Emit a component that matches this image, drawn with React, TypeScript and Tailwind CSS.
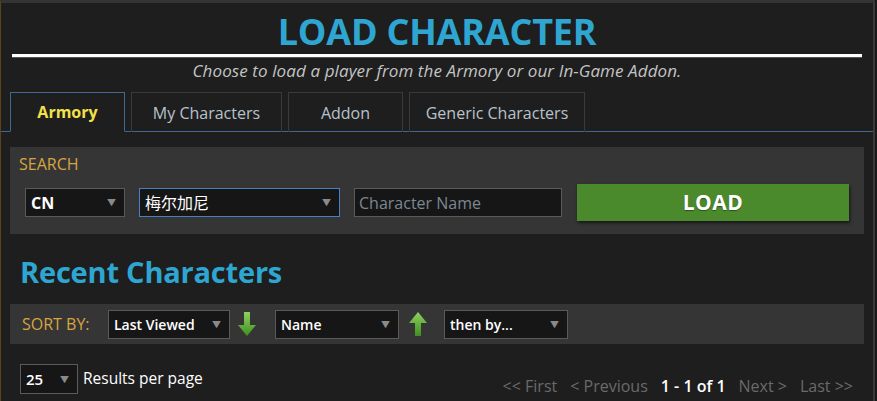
import React from "react";

const font = { fontFamily: '"Open Sans", "Noto Sans CJK SC", sans-serif' };

const tabs = [
  { label: "Armory", w: "w-[115px]", active: true },
  { label: "My Characters", w: "w-[151px]" },
  { label: "Addon", w: "w-[115px]" },
  { label: "Generic Characters", w: "w-[176px]" },
];

function Caret() {
  return <span className="text-[9px] text-[#8a8a8a] leading-none">▼</span>;
}

function Select({
  value,
  className,
  focused,
}: {
  value: string;
  className: string;
  focused?: boolean;
}) {
  return (
    <div
      className={`flex items-center justify-between bg-[#161616] border pl-[5px] pr-[8px] ${
        focused ? "border-[#4d7fc0]" : "border-[#5a5a5a]"
      } ${className}`}
    >
      <span className="text-white">{value}</span>
      <Caret />
    </div>
  );
}

function Arrow({ up }: { up?: boolean }) {
  return (
    <svg width="20" height="26" viewBox="0 0 20 26" className={up ? "rotate-180" : ""}>
      <defs>
        <linearGradient id={up ? "gu" : "gd"} x1="0" y1="0" x2="0" y2="1">
          <stop offset="0" stopColor={up ? "#3f8f1f" : "#8fd060"} />
          <stop offset="1" stopColor={up ? "#8fd060" : "#3f8f1f"} />
        </linearGradient>
      </defs>
      <path d="M7 1h6v13h6L10 25 1 14h6z" fill={`url(#${up ? "gu" : "gd"})`} />
    </svg>
  );
}

export default function App() {
  return (
    <div className="w-[877px] h-[401px] overflow-hidden bg-[#191919] pr-[2px]" style={font}>
      <div className="h-full bg-[#1e1e1e] border-t-[3px] border-t-[#343434] border-l border-l-[#5e4318] border-r-2 border-r-[#3a3a3a]">
        {/* header */}
        <div className="px-[11px] pt-[9px]">
          <h1 className="text-center text-[36px] leading-[40px] font-bold text-[#2ea6d1] tracking-[-0.2px]">
            LOAD CHARACTER
          </h1>
          <div className="h-[3px] bg-white mt-[2px] shadow-[0_1px_0_#555]" />
          <p className="text-center italic text-[17px] text-[#c4c4c4] mt-[3px] leading-[22px] tracking-[0.1px]">
            Choose to load a player from the Armory or our In-Game Addon.
          </p>
        </div>

        {/* tabs */}
        <div className="flex gap-[6px] pl-[9px] mt-[10px] border-b border-[#3b6b95] h-[40px]">
          {tabs.map((t) => (
            <div
              key={t.label}
              className={`${t.w} h-[40px] flex items-center justify-center border text-[16px] ${
                t.active
                  ? "border-[#3b6b95] border-b-[#1e1e1e] text-[#f2e24a] font-bold"
                  : "border-[#3a3a3a] border-b-0 h-[39px] text-[#b8c2cc]"
              }`}
            >
              {t.label}
            </div>
          ))}
        </div>

        {/* search panel */}
        <div className="mx-[9px] mt-[15px] bg-[#353535] h-[87px] px-[9px] pt-[7px]">
          <div className="text-[#d9a441] text-[16px] leading-[20px]">SEARCH</div>
          <div className="flex items-center mt-[10px] pl-[6px] gap-[15px]">
            <Select value="CN" className="w-[100px] h-[29px] font-bold text-[16px]" />
            <Select value="梅尔加尼" focused className="w-[201px] h-[29px] text-[16px] -ml-px" />
            <div className="w-[208px] h-[29px] bg-[#161616] border border-[#5a5a5a] flex items-center pl-[4px] text-[16px] text-[#7c8794] -ml-px">
              Character Name
            </div>
            <button className="w-[272px] h-[37px] bg-[#4b892d] text-white font-bold text-[21px] tracking-[0.5px] shadow-[1px_2px_3px_rgba(0,0,0,0.6)] [text-shadow:0_1px_1px_rgba(0,0,0,0.4)]">
              LOAD
            </button>
          </div>
        </div>

        {/* recent */}
        <h2 className="ml-[19px] mt-[20px] text-[29px] leading-[36px] font-bold text-[#2ea6d1] tracking-[-0.2px]">
          Recent Characters
        </h2>

        <div className="mx-[9px] mt-[14px] bg-[#353535] h-[40px] flex items-center pl-[12px]">
          <span className="text-[#d9a441] text-[16px] w-[86px]">SORT BY:</span>
          <Select value="Last Viewed" className="w-[122px] h-[29px] text-[14px] font-semibold" />
          <div className="w-[45px] flex justify-center pr-[12px]">
            <Arrow />
          </div>
          <Select value="Name" className="w-[124px] h-[29px] text-[14px] font-semibold" />
          <div className="w-[45px] flex justify-center pr-[8px]">
            <Arrow up />
          </div>
          <Select value="then by..." className="w-[124px] h-[29px] text-[14px] font-semibold" />
        </div>

        {/* bottom row */}
        <div className="flex items-end justify-between mt-[20px] pl-[19px] pr-[20px]">
          <div className="flex items-center gap-[5px]">
            <Select value="25" className="w-[58px] h-[30px] text-[15px] font-semibold" />
            <span className="text-white text-[15.5px]">Results per page</span>
          </div>
          <div className="flex gap-[13px] text-[16px] text-[#6a6a6a] translate-y-[4px]">
            <span>&lt;&lt; First</span>
            <span>&lt; Previous</span>
            <span className="text-white font-semibold">1 - 1 of 1</span>
            <span>Next &gt;</span>
            <span>Last &gt;&gt;</span>
          </div>
        </div>
      </div>
    </div>
  );
}
